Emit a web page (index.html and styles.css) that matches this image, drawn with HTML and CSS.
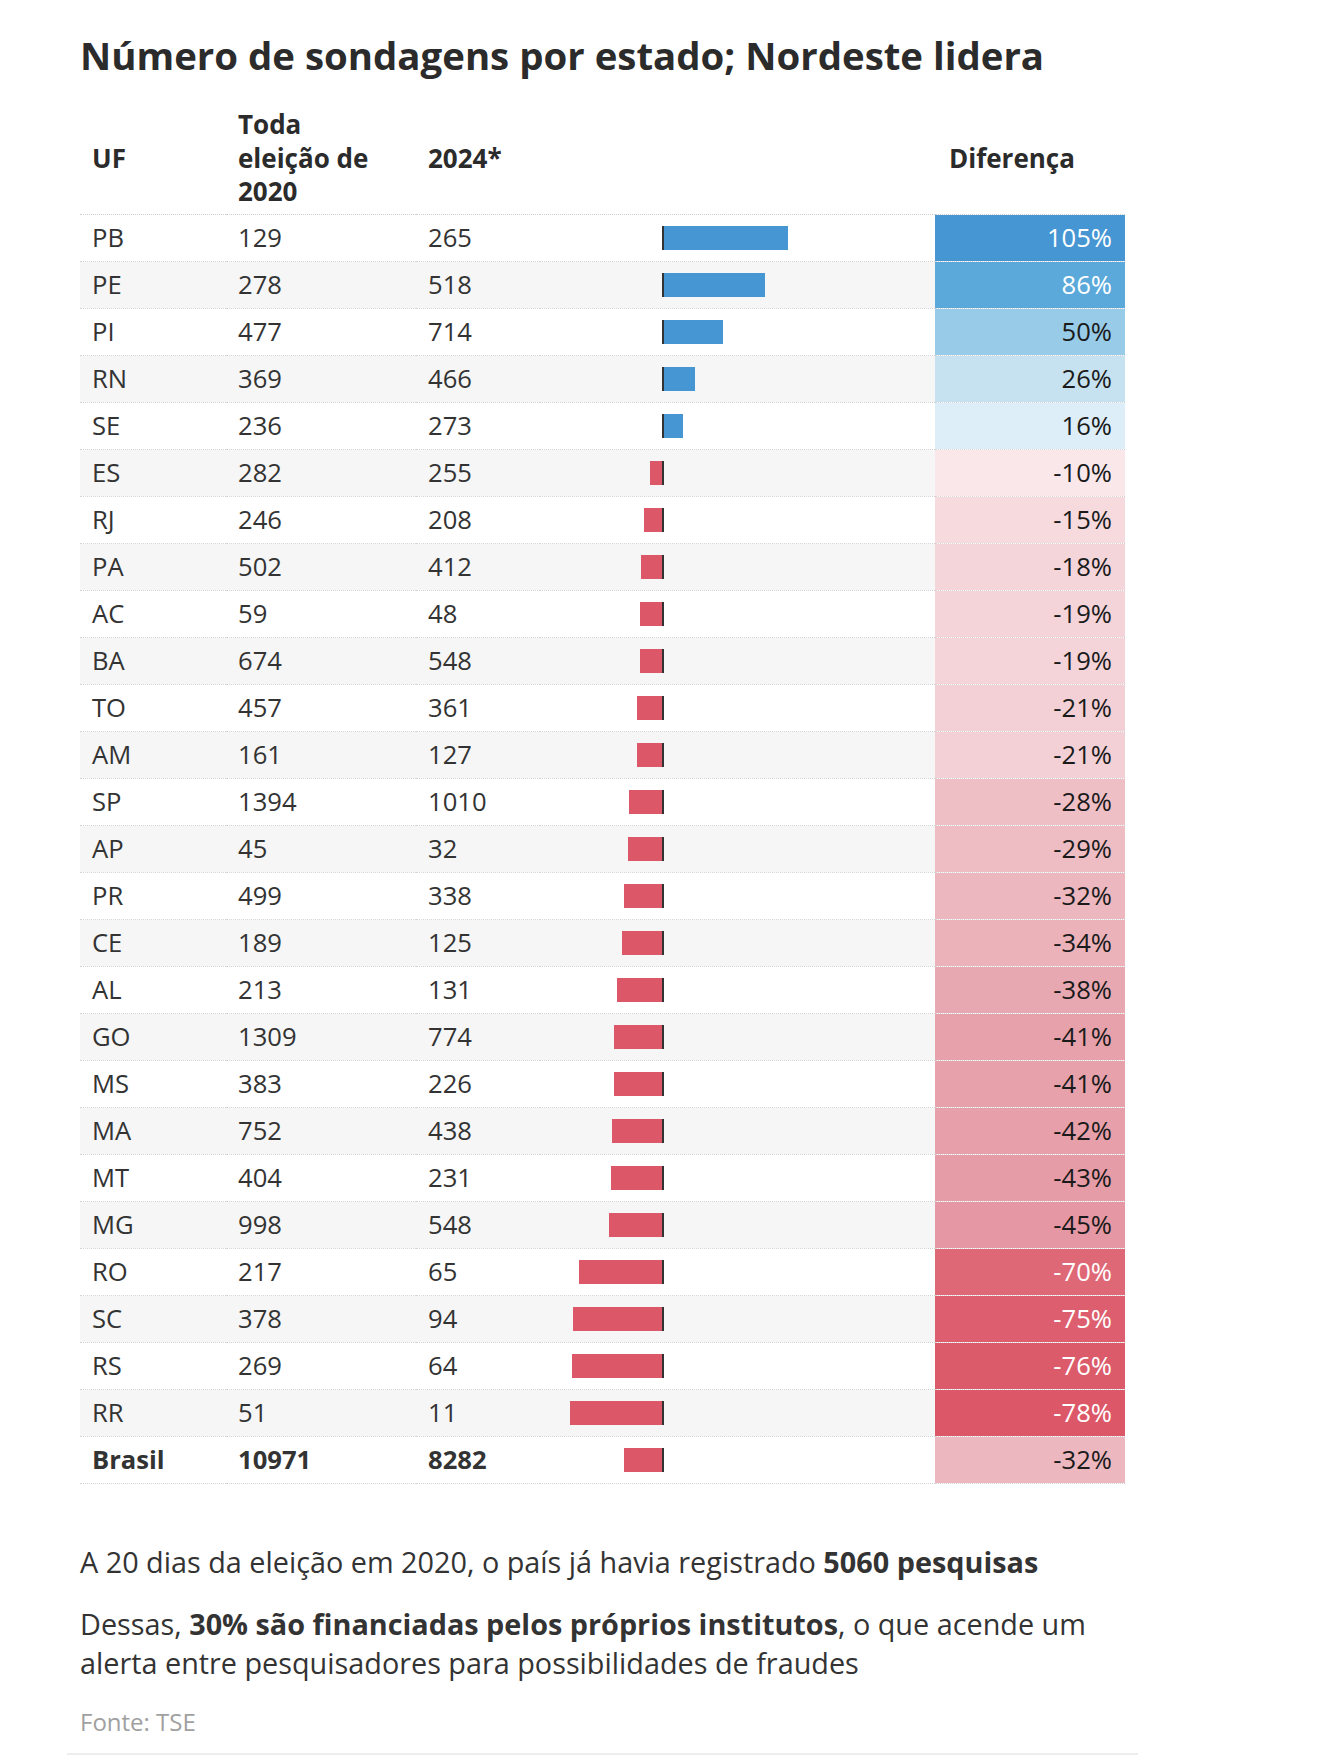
FILE: index.html
```html
<!DOCTYPE html>
<html lang="pt-BR">
<head>
<meta charset="utf-8">
<title>Número de sondagens por estado</title>
<link rel="stylesheet" href="styles.css">
</head>
<body>
<div class="chart">
  <h1 class="title">Número de sondagens por estado; Nordeste lidera</h1>
  <table class="data">
    <colgroup>
      <col class="c-uf"><col class="c-2020"><col class="c-2024"><col class="c-bar"><col class="c-diff">
    </colgroup>
    <thead>
      <tr>
        <th>UF</th>
        <th><span class="wrap">Toda eleição de 2020</span></th>
        <th>2024*</th>
        <th></th>
        <th class="diff-h">Diferença</th>
      </tr>
    </thead>
    <tbody>
      <tr><td>PB</td><td>129</td><td>265</td><td class="bc"><div class="track"><div class="neg"></div><span class="tick"></span><div class="pos"><span class="bar up" style="width:124px"></span></div></div></td><td class="diff light" style="background-color:#4596d3">105%</td></tr>
      <tr><td>PE</td><td>278</td><td>518</td><td class="bc"><div class="track"><div class="neg"></div><span class="tick"></span><div class="pos"><span class="bar up" style="width:101px"></span></div></div></td><td class="diff light" style="background-color:#5aa9da">86%</td></tr>
      <tr><td>PI</td><td>477</td><td>714</td><td class="bc"><div class="track"><div class="neg"></div><span class="tick"></span><div class="pos"><span class="bar up" style="width:59px"></span></div></div></td><td class="diff" style="background-color:#97cbe8">50%</td></tr>
      <tr><td>RN</td><td>369</td><td>466</td><td class="bc"><div class="track"><div class="neg"></div><span class="tick"></span><div class="pos"><span class="bar up" style="width:31px"></span></div></div></td><td class="diff" style="background-color:#c6e2f1">26%</td></tr>
      <tr><td>SE</td><td>236</td><td>273</td><td class="bc"><div class="track"><div class="neg"></div><span class="tick"></span><div class="pos"><span class="bar up" style="width:19px"></span></div></div></td><td class="diff" style="background-color:#ddeef8">16%</td></tr>
      <tr><td>ES</td><td>282</td><td>255</td><td class="bc"><div class="track"><div class="neg"><span class="bar down" style="width:12px"></span></div><span class="tick"></span><div class="pos"></div></div></td><td class="diff" style="background-color:#f9e7ea">-10%</td></tr>
      <tr><td>RJ</td><td>246</td><td>208</td><td class="bc"><div class="track"><div class="neg"><span class="bar down" style="width:18px"></span></div><span class="tick"></span><div class="pos"></div></div></td><td class="diff" style="background-color:#f6dade">-15%</td></tr>
      <tr><td>PA</td><td>502</td><td>412</td><td class="bc"><div class="track"><div class="neg"><span class="bar down" style="width:21px"></span></div><span class="tick"></span><div class="pos"></div></div></td><td class="diff" style="background-color:#f4d5da">-18%</td></tr>
      <tr><td>AC</td><td>59</td><td>48</td><td class="bc"><div class="track"><div class="neg"><span class="bar down" style="width:22px"></span></div><span class="tick"></span><div class="pos"></div></div></td><td class="diff" style="background-color:#f4d4d9">-19%</td></tr>
      <tr><td>BA</td><td>674</td><td>548</td><td class="bc"><div class="track"><div class="neg"><span class="bar down" style="width:22px"></span></div><span class="tick"></span><div class="pos"></div></div></td><td class="diff" style="background-color:#f4d4d9">-19%</td></tr>
      <tr><td>TO</td><td>457</td><td>361</td><td class="bc"><div class="track"><div class="neg"><span class="bar down" style="width:25px"></span></div><span class="tick"></span><div class="pos"></div></div></td><td class="diff" style="background-color:#f2d0d6">-21%</td></tr>
      <tr><td>AM</td><td>161</td><td>127</td><td class="bc"><div class="track"><div class="neg"><span class="bar down" style="width:25px"></span></div><span class="tick"></span><div class="pos"></div></div></td><td class="diff" style="background-color:#f2d0d6">-21%</td></tr>
      <tr><td>SP</td><td>1394</td><td>1010</td><td class="bc"><div class="track"><div class="neg"><span class="bar down" style="width:33px"></span></div><span class="tick"></span><div class="pos"></div></div></td><td class="diff" style="background-color:#efbfc6">-28%</td></tr>
      <tr><td>AP</td><td>45</td><td>32</td><td class="bc"><div class="track"><div class="neg"><span class="bar down" style="width:34px"></span></div><span class="tick"></span><div class="pos"></div></div></td><td class="diff" style="background-color:#eebdc4">-29%</td></tr>
      <tr><td>PR</td><td>499</td><td>338</td><td class="bc"><div class="track"><div class="neg"><span class="bar down" style="width:38px"></span></div><span class="tick"></span><div class="pos"></div></div></td><td class="diff" style="background-color:#ecb7bf">-32%</td></tr>
      <tr><td>CE</td><td>189</td><td>125</td><td class="bc"><div class="track"><div class="neg"><span class="bar down" style="width:40px"></span></div><span class="tick"></span><div class="pos"></div></div></td><td class="diff" style="background-color:#ebb2ba">-34%</td></tr>
      <tr><td>AL</td><td>213</td><td>131</td><td class="bc"><div class="track"><div class="neg"><span class="bar down" style="width:45px"></span></div><span class="tick"></span><div class="pos"></div></div></td><td class="diff" style="background-color:#e8a8b1">-38%</td></tr>
      <tr><td>GO</td><td>1309</td><td>774</td><td class="bc"><div class="track"><div class="neg"><span class="bar down" style="width:48px"></span></div><span class="tick"></span><div class="pos"></div></div></td><td class="diff" style="background-color:#e7a1ab">-41%</td></tr>
      <tr><td>MS</td><td>383</td><td>226</td><td class="bc"><div class="track"><div class="neg"><span class="bar down" style="width:48px"></span></div><span class="tick"></span><div class="pos"></div></div></td><td class="diff" style="background-color:#e7a1ab">-41%</td></tr>
      <tr><td>MA</td><td>752</td><td>438</td><td class="bc"><div class="track"><div class="neg"><span class="bar down" style="width:50px"></span></div><span class="tick"></span><div class="pos"></div></div></td><td class="diff" style="background-color:#e79fa9">-42%</td></tr>
      <tr><td>MT</td><td>404</td><td>231</td><td class="bc"><div class="track"><div class="neg"><span class="bar down" style="width:51px"></span></div><span class="tick"></span><div class="pos"></div></div></td><td class="diff" style="background-color:#e69ca6">-43%</td></tr>
      <tr><td>MG</td><td>998</td><td>548</td><td class="bc"><div class="track"><div class="neg"><span class="bar down" style="width:53px"></span></div><span class="tick"></span><div class="pos"></div></div></td><td class="diff" style="background-color:#e598a3">-45%</td></tr>
      <tr><td>RO</td><td>217</td><td>65</td><td class="bc"><div class="track"><div class="neg"><span class="bar down" style="width:83px"></span></div><span class="tick"></span><div class="pos"></div></div></td><td class="diff light" style="background-color:#df6877">-70%</td></tr>
      <tr><td>SC</td><td>378</td><td>94</td><td class="bc"><div class="track"><div class="neg"><span class="bar down" style="width:89px"></span></div><span class="tick"></span><div class="pos"></div></div></td><td class="diff light" style="background-color:#dd5e6e">-75%</td></tr>
      <tr><td>RS</td><td>269</td><td>64</td><td class="bc"><div class="track"><div class="neg"><span class="bar down" style="width:90px"></span></div><span class="tick"></span><div class="pos"></div></div></td><td class="diff light" style="background-color:#dc5b6b">-76%</td></tr>
      <tr><td>RR</td><td>51</td><td>11</td><td class="bc"><div class="track"><div class="neg"><span class="bar down" style="width:92px"></span></div><span class="tick"></span><div class="pos"></div></div></td><td class="diff light" style="background-color:#dc5868">-78%</td></tr>
      <tr class="total"><td>Brasil</td><td>10971</td><td>8282</td><td class="bc"><div class="track"><div class="neg"><span class="bar down" style="width:38px"></span></div><span class="tick"></span><div class="pos"></div></div></td><td class="diff" style="background-color:#ecb7bf">-32%</td></tr>
    </tbody>
  </table>
  <div class="notes">
    <p>A 20 dias da eleição em 2020, o país já havia registrado <b>5060 pesquisas</b></p>
    <p>Dessas, <b>30% são financiadas pelos próprios institutos</b>, o que acende um alerta entre pesquisadores para possibilidades de fraudes</p>
  </div>
  <div class="source">Fonte: TSE</div>
</div>
</body>
</html>
```
FILE: styles.css
```css
body {
  margin: 0;
  background: #fff;
  font-family: "Open Sans", "Liberation Sans", sans-serif;
  color: #333;
}

.chart {
  width: 1071px;
  margin-left: 67px;
  padding: 0 13px 15px;
  box-sizing: border-box;
  border-bottom: 2px solid #eeeeee;
}

.title {
  font-size: 38.4px;
  font-weight: 700;
  line-height: 46px;
  margin: 32px 0 23px;
  color: #2b2b2b;
}

.data {
  width: 1045px;
  table-layout: fixed;
  border-collapse: separate;
  border-spacing: 0;
}

.c-uf { width: 146px; }
.c-2020 { width: 190px; }
.c-2024 { width: 124px; }
.c-bar { width: 395px; }
.c-diff { width: 190px; }

.data th {
  font-size: 26px;
  font-weight: 700;
  line-height: 33.6px;
  text-align: left;
  vertical-align: middle;
  padding: 7px 12px 5px;
  border-bottom: 1px dotted #cfcfcf;
  color: #2b2b2b;
}

.wrap {
  display: block;
  max-width: 145px;
}

.data th.diff-h {
  padding-left: 14px;
}

.data td {
  font-size: 25.6px;
  line-height: 34px;
  padding: 6px 12px;
  border-bottom: 1px dotted #d4d4d4;
  background-clip: padding-box;
  white-space: nowrap;
}

.data tbody tr:nth-child(even) td {
  background-color: #f6f6f6;
}

.data tr.total td {
  font-weight: 700;
}

.data tr.total td.diff {
  font-weight: 400;
}

.data td.bc {
  padding-left: 0;
  padding-right: 0;
}

.track {
  display: flex;
  align-items: center;
  height: 24px;
}

.neg {
  width: 122px;
  display: flex;
  justify-content: flex-end;
}

.pos {
  display: flex;
}

.tick {
  width: 2px;
  height: 24px;
  background: #333;
}

.bar {
  display: block;
  height: 24px;
}

.bar.up { background: #4596d3; }
.bar.down { background: #dc5869; }

.data td.diff {
  text-align: right;
  padding-right: 13px;
  color: #1a1a1a;
}

.data td.diff.light {
  color: #fff;
}

.notes {
  margin-top: 58px;
  font-size: 28.8px;
  line-height: 39.3px;
  color: #333;
}

.notes p {
  margin: 0 0 23px;
}

.notes b {
  font-weight: 700;
}

.source {
  margin-top: 4px;
  font-size: 24px;
  line-height: 32px;
  color: #a0a0a0;
}
```
